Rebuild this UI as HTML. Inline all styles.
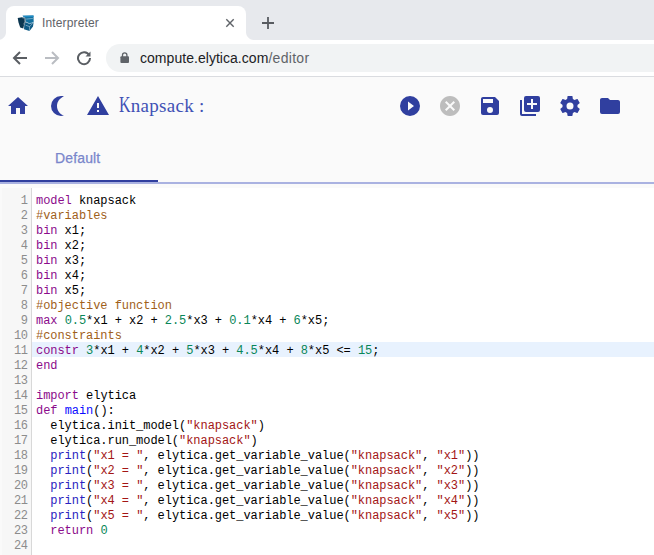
<!DOCTYPE html>
<html><head><meta charset="utf-8"><title>Interpreter</title>
<style>
html,body{margin:0;padding:0}
body{width:654px;height:555px;overflow:hidden;position:relative;background:#fafafa;font-family:"Liberation Sans",sans-serif}
.abs{position:absolute}
#strip{left:0;top:0;width:654px;height:40px;background:#e7e9ed}
#tab{left:6px;top:6px;width:240px;height:34px;background:#fff;border-radius:8px 8px 0 0}
#tabl{left:-2px;top:32px;width:8px;height:8px;background:radial-gradient(circle at 0 0,rgba(255,255,255,0) 7.5px,#fff 8.5px)}
#tabr{left:246px;top:32px;width:8px;height:8px;background:radial-gradient(circle at 100% 0,rgba(255,255,255,0) 7.5px,#fff 8.5px)}
#ttl{left:42px;top:16px;font-size:12px;line-height:15px;letter-spacing:0.15px;color:#5f6368;white-space:nowrap}
#bar{left:0;top:40px;width:654px;height:36px;background:#fff;border-bottom:1px solid #dadce0}
#omni{left:106px;top:44px;width:600px;height:28px;border-radius:14px;background:#f1f3f4}
#url{left:140px;top:49px;font-size:14px;line-height:18px;color:#202124;white-space:nowrap;letter-spacing:0.04px}
#url i{font-style:normal;color:#5f6368;letter-spacing:0.3px}
.ic{position:absolute}
#title{left:119px;top:95px;letter-spacing:0.3px;font-family:"Liberation Serif",serif;font-size:19px;line-height:22px;color:#3f51b5;white-space:nowrap}
#title .K{display:inline-block;transform:scale(0.84,1.17);transform-origin:0 81%;margin-right:-2.3px}
#deflt{left:55px;letter-spacing:0.15px;-webkit-text-stroke:0.25px #7986cb;top:150px;font-size:14px;line-height:16px;color:#7986cb;white-space:nowrap}
#l1{left:0;top:182px;width:654px;height:2px;background:#aab2e1}
#l2{left:0;top:180px;width:158px;height:2px;background:#303f9f}
#ed{left:2px;top:188px;width:652px;height:367px;background:#fff}
#gut{left:2px;top:188px;width:29px;height:367px;background:#f7f7f7;border-right:1px solid #d8d8d8}
#code{left:0;top:192px;width:654px;font-family:"Liberation Mono",monospace;font-size:12px;line-height:15px;color:#000}
.ln{height:15px;position:relative}
.act{background:linear-gradient(90deg,rgba(0,0,0,0) 32px,#e8f2fe 32px)}
.no{position:absolute;left:0;top:2px;width:28px;text-align:right;color:#8c8c8c;font-size:12px;letter-spacing:-0.4px;padding-right:0.4px;box-sizing:border-box}
.cd{position:absolute;left:36px;top:2px;letter-spacing:-0.05px;white-space:pre}
.kw{color:#8b0a8b}.cm{color:#a0601a}.n{color:#098658}.s{color:#a31515}.b{color:#0a0aff}.p{color:#2a22c0}
</style></head><body>
<div id="strip" class="abs"></div>
<div id="tab" class="abs"></div><div id="tabl" class="abs"></div><div id="tabr" class="abs"></div>
<svg class="ic" style="left:16.8px;top:14.5px" width="17" height="17" viewBox="0 0 17 17"><path d="M5.5 0.7L16.5 0.4 16.7 7.3 12.5 8.7 8.7 6.8 8.3 2.8z" fill="#13709f"/><path d="M5.5 0.7L16.5 0.4 16.5 1.9 7 2.2z" fill="#1e8cc6"/><path d="M8.7 7.1L12.5 8.7 16.6 7.4 16 11.5 12.5 16.1 7 14.3 7.3 10z" fill="#0e5a85"/><path d="M0.7 3.1L5 2.2 8.3 2.8 8.4 7 7 10 6.3 13.4 3.2 12.5 1.5 7.5z" fill="#0b3650"/><path d="M5.2 2.7L7.7 3.2 7.8 6.8 6.6 9.4M8.9 7L12.5 8.6 16.4 7.4M8.6 10.2L12.6 11.6 12.4 15.8M9.2 4.1L15.9 3.4M12.6 11.6L15.8 8.2" stroke="#d5e8f1" stroke-width="0.55" fill="none" opacity="0.85"/></svg>
<div id="ttl" class="abs">Interpreter</div>
<svg class="ic" style="left:224px;top:17.2px" width="12" height="12" viewBox="0 0 12 12"><path d="M2.3 2.3l7.4 7.4M9.7 2.3l-7.4 7.4" stroke="#5f6368" stroke-width="1.4" fill="none"/></svg>
<svg class="ic" style="left:261px;top:16px" width="14" height="14" viewBox="0 0 14 14"><path d="M7 1v12M1 7h12" stroke="#585b60" stroke-width="1.8" fill="none"/></svg>
<div id="bar" class="abs"></div>
<svg class="ic" style="left:12px;top:50px" width="16" height="16" viewBox="0 0 16 16"><path d="M15 8H2.5M8 2L2 8l6 6" stroke="#5a5e63" stroke-width="2" fill="none"/></svg>
<svg class="ic" style="left:44px;top:50px" width="16" height="16" viewBox="0 0 16 16"><path d="M1 8h12.5M8 2l6 6-6 6" stroke="#babdc2" stroke-width="2" fill="none"/></svg>
<svg class="ic" style="left:76px;top:50px" width="16" height="16" viewBox="0 0 16 16"><path d="M13.2 5.2A6 6 0 1 0 14 8" stroke="#5a5e63" stroke-width="2" fill="none"/><path d="M14.5 1.5v5h-5z" fill="#5f6368"/></svg>
<div id="omni" class="abs"></div>
<svg class="ic" style="left:119.5px;top:52px" width="10" height="12" viewBox="0 0 10 12"><rect x="0.4" y="4.3" width="8.6" height="6.7" rx="0.9" fill="#5f6368"/><path d="M2.5 5V3.1a2.2 2.2 0 0 1 4.4 0V5" stroke="#5f6368" stroke-width="1.3" fill="none"/></svg>
<div id="url" class="abs">compute.elytica.com<i>/editor</i></div>
<svg class="ic" style="left:6.4px;top:93.7px" width="24" height="24" viewBox="0 0 24 24"><path fill="#303f9f" d="M10,20V14H14V20H19V12H22L12,3L2,12H5V20H10Z"/></svg>
<svg class="ic" style="left:46.4px;top:93.7px" width="24" height="24" viewBox="0 0 24 24"><path fill="#303f9f" d="M15,2C16.05,2 17.05,2.16 18,2.46C13.94,3.73 11,7.5 11,12C11,16.5 13.94,20.27 18,21.54C17.05,21.84 16.05,22 15,22A10,10 0 0,1 5,12A10,10 0 0,1 15,2Z"/></svg>
<svg class="ic" style="left:86.4px;top:93.7px" width="24" height="24" viewBox="0 0 24 24"><path fill="#303f9f" d="M13 14H11V9H13M13 18H11V16H13M1 21H23L12 2L1 21Z"/></svg>
<svg class="ic" style="left:398.4px;top:93.7px" width="24" height="24" viewBox="0 0 24 24"><path fill="#303f9f" d="M10,16.5V7.5L16,12M12,2A10,10 0 0,0 2,12A10,10 0 0,0 12,22A10,10 0 0,0 22,12A10,10 0 0,0 12,2Z"/></svg>
<svg class="ic" style="left:438.4px;top:93.7px" width="24" height="24" viewBox="0 0 24 24"><path fill="#bdbdbd" d="M12,2C17.53,2 22,6.47 22,12C22,17.53 17.53,22 12,22C6.47,22 2,17.53 2,12C2,6.47 6.47,2 12,2M15.59,7L12,10.59L8.41,7L7,8.41L10.59,12L7,15.59L8.41,17L12,13.41L15.59,17L17,15.59L13.41,12L17,8.41L15.59,7Z"/></svg>
<svg class="ic" style="left:478.4px;top:93.7px" width="24" height="24" viewBox="0 0 24 24"><path fill="#303f9f" d="M15,9H5V5H15M12,19A3,3 0 0,1 9,16A3,3 0 0,1 12,13A3,3 0 0,1 15,16A3,3 0 0,1 12,19M17,3H5C3.89,3 3,3.9 3,5V19A2,2 0 0,0 5,21H19A2,2 0 0,0 21,19V7L17,3Z"/></svg>
<svg class="ic" style="left:518.4px;top:93.7px" width="24" height="24" viewBox="0 0 24 24"><path fill="#303f9f" d="M19,11H15V15H13V11H9V9H13V5H15V9H19M20,2H8A2,2 0 0,0 6,4V16A2,2 0 0,0 8,18H20A2,2 0 0,0 22,16V4A2,2 0 0,0 20,2M4,6H2V20A2,2 0 0,0 4,22H18V20H4V6Z"/></svg>
<svg class="ic" style="left:558.4px;top:93.7px" width="24" height="24" viewBox="0 0 24 24"><path fill="#303f9f" d="M12,15.5A3.5,3.5 0 0,1 8.5,12A3.5,3.5 0 0,1 12,8.5A3.5,3.5 0 0,1 15.5,12A3.5,3.5 0 0,1 12,15.5M19.43,12.97C19.47,12.65 19.5,12.33 19.5,12C19.5,11.67 19.47,11.34 19.43,11L21.54,9.37C21.73,9.22 21.78,8.95 21.66,8.73L19.66,5.27C19.54,5.05 19.27,4.96 19.05,5.05L16.56,6.05C16.04,5.66 15.5,5.32 14.87,5.07L14.5,2.42C14.46,2.18 14.25,2 14,2H10C9.75,2 9.54,2.18 9.5,2.42L9.13,5.07C8.5,5.32 7.96,5.66 7.44,6.05L4.95,5.05C4.73,4.96 4.46,5.05 4.34,5.27L2.34,8.73C2.21,8.95 2.27,9.22 2.46,9.37L4.57,11C4.53,11.34 4.5,11.67 4.5,12C4.5,12.33 4.53,12.65 4.57,12.97L2.46,14.63C2.27,14.78 2.21,15.05 2.34,15.27L4.34,18.73C4.46,18.95 4.73,19.03 4.95,18.95L7.44,17.94C7.96,18.34 8.5,18.68 9.13,18.93L9.5,21.58C9.54,21.82 9.75,22 10,22H14C14.25,22 14.46,21.82 14.5,21.58L14.87,18.93C15.5,18.67 16.04,18.34 16.56,17.94L19.05,18.95C19.27,19.03 19.54,18.95 19.66,18.73L21.66,15.27C21.78,15.05 21.73,14.78 21.54,14.63L19.43,12.97Z"/></svg>
<svg class="ic" style="left:598.4px;top:93.7px" width="24" height="24" viewBox="0 0 24 24"><path fill="#303f9f" d="M10,4H4C2.89,4 2,4.89 2,6V18A2,2 0 0,0 4,20H20A2,2 0 0,0 22,18V8C22,6.89 21.1,6 20,6H12L10,4Z"/></svg>
<div id="title" class="abs"><span class="K">K</span>napsack :</div>
<div id="deflt" class="abs">Default</div>
<div id="ed" class="abs"></div>
<div id="l1" class="abs"></div><div id="l2" class="abs"></div>
<div id="gut" class="abs"></div>
<div id="code" class="abs">
<div class="ln"><span class="no">1</span><span class="cd"><span class="kw">model</span> knapsack</span></div>
<div class="ln"><span class="no">2</span><span class="cd"><span class="cm">#variables</span></span></div>
<div class="ln"><span class="no">3</span><span class="cd"><span class="kw">bin</span> x1;</span></div>
<div class="ln"><span class="no">4</span><span class="cd"><span class="kw">bin</span> x2;</span></div>
<div class="ln"><span class="no">5</span><span class="cd"><span class="kw">bin</span> x3;</span></div>
<div class="ln"><span class="no">6</span><span class="cd"><span class="kw">bin</span> x4;</span></div>
<div class="ln"><span class="no">7</span><span class="cd"><span class="kw">bin</span> x5;</span></div>
<div class="ln"><span class="no">8</span><span class="cd"><span class="cm">#objective function</span></span></div>
<div class="ln"><span class="no">9</span><span class="cd"><span class="kw">max</span> <span class="n">0.5</span>*x1 + x2 + <span class="n">2.5</span>*x3 + <span class="n">0.1</span>*x4 + <span class="n">6</span>*x5;</span></div>
<div class="ln"><span class="no">10</span><span class="cd"><span class="cm">#constraints</span></span></div>
<div class="ln act"><span class="no">11</span><span class="cd"><span class="kw">constr</span> <span class="n">3</span>*x1 + <span class="n">4</span>*x2 + <span class="n">5</span>*x3 + <span class="n">4.5</span>*x4 + <span class="n">8</span>*x5 &lt;= <span class="n">15</span>;</span></div>
<div class="ln"><span class="no">12</span><span class="cd"><span class="kw">end</span></span></div>
<div class="ln"><span class="no">13</span><span class="cd"></span></div>
<div class="ln"><span class="no">14</span><span class="cd"><span class="kw">import</span> elytica</span></div>
<div class="ln"><span class="no">15</span><span class="cd"><span class="kw">def</span> <span class="b">main</span>():</span></div>
<div class="ln"><span class="no">16</span><span class="cd">  elytica.init_model(<span class="s">"knapsack"</span>)</span></div>
<div class="ln"><span class="no">17</span><span class="cd">  elytica.run_model(<span class="s">"knapsack"</span>)</span></div>
<div class="ln"><span class="no">18</span><span class="cd">  <span class="p">print</span>(<span class="s">"x1 = "</span>, elytica.get_variable_value(<span class="s">"knapsack"</span>, <span class="s">"x1"</span>))</span></div>
<div class="ln"><span class="no">19</span><span class="cd">  <span class="p">print</span>(<span class="s">"x2 = "</span>, elytica.get_variable_value(<span class="s">"knapsack"</span>, <span class="s">"x2"</span>))</span></div>
<div class="ln"><span class="no">20</span><span class="cd">  <span class="p">print</span>(<span class="s">"x3 = "</span>, elytica.get_variable_value(<span class="s">"knapsack"</span>, <span class="s">"x3"</span>))</span></div>
<div class="ln"><span class="no">21</span><span class="cd">  <span class="p">print</span>(<span class="s">"x4 = "</span>, elytica.get_variable_value(<span class="s">"knapsack"</span>, <span class="s">"x4"</span>))</span></div>
<div class="ln"><span class="no">22</span><span class="cd">  <span class="p">print</span>(<span class="s">"x5 = "</span>, elytica.get_variable_value(<span class="s">"knapsack"</span>, <span class="s">"x5"</span>))</span></div>
<div class="ln"><span class="no">23</span><span class="cd">  <span class="kw">return</span> <span class="n">0</span></span></div>
<div class="ln"><span class="no">24</span><span class="cd"></span></div>
</div>
</body></html>
